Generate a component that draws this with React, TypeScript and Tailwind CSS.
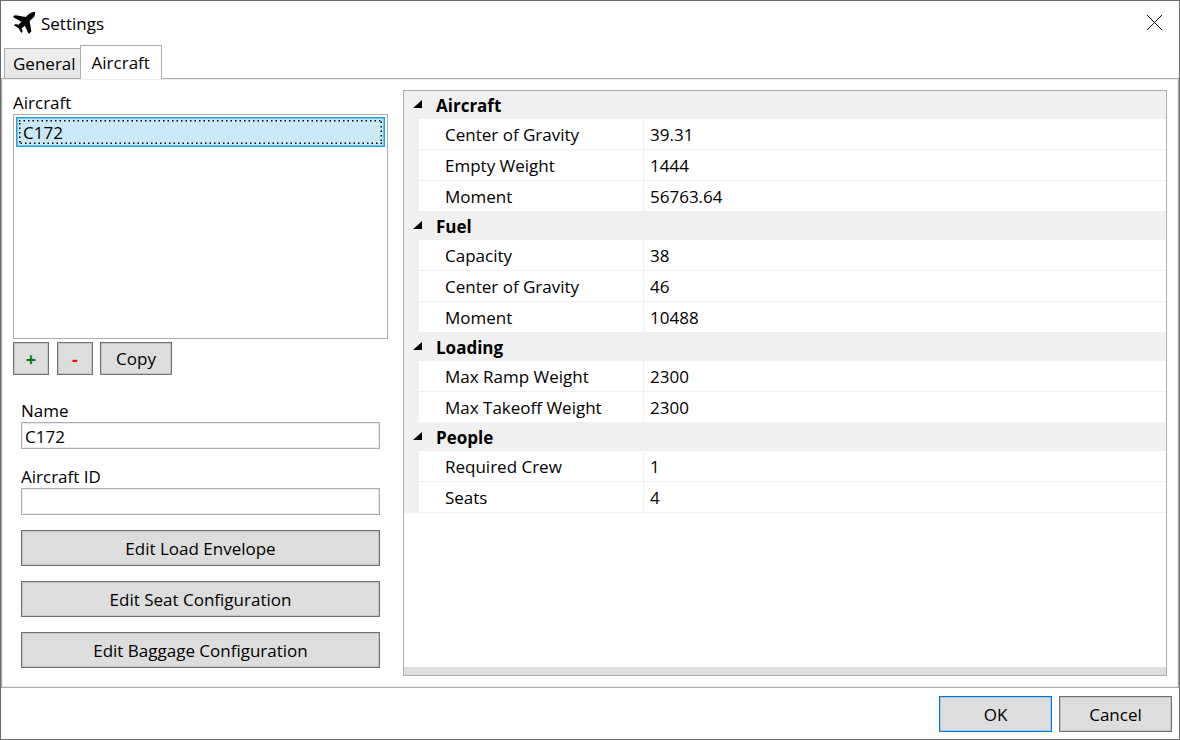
import { useState } from "react";
import type { ReactNode } from "react";

type Group = { title: string; rows: [string, string][] };

const groups: Group[] = [
  { title: "Aircraft", rows: [["Center of Gravity", "39.31"], ["Empty Weight", "1444"], ["Moment", "56763.64"]] },
  { title: "Fuel", rows: [["Capacity", "38"], ["Center of Gravity", "46"], ["Moment", "10488"]] },
  { title: "Loading", rows: [["Max Ramp Weight", "2300"], ["Max Takeoff Weight", "2300"]] },
  { title: "People", rows: [["Required Crew", "1"], ["Seats", "4"]] },
];

function PushButton({
  children,
  className = "h-9 w-full",
  border = "border-[#707070] inset-shadow-[0_0_0_1px_#c4c4c4]",
  label,
}: {
  children: ReactNode;
  className?: string;
  border?: string;
  label?: string;
}) {
  return (
    <button
      type="button"
      aria-label={label}
      className={`flex items-center justify-center border bg-[#dddddd] pt-px leading-6 hover:bg-[#bee6fd] ${border} ${className}`}
    >
      {children}
    </button>
  );
}

function TextField({ id, label, value = "" }: { id: string; label: string; value?: string }) {
  return (
    <div className="flex flex-col">
      <label htmlFor={id} className="h-[25px] pt-0.5 leading-6">{label}</label>
      <input
        id={id}
        type="text"
        defaultValue={value}
        className="h-[27px] w-full border border-[#abadb3] bg-white px-[3px] pt-0.5 inset-shadow-[0_0_0_1px_#ececee] outline-none"
      />
    </div>
  );
}

function PropertyGroup({ title, rows }: Group) {
  const [open, setOpen] = useState(true);
  return (
    <tbody>
      <tr className="h-7 bg-[#f0f0f0]">
        <th colSpan={3} scope="rowgroup" className="p-0 text-left font-bold">
          <button type="button" aria-expanded={open} onClick={() => setOpen(!open)} className="flex h-7 w-full items-center gap-3 pt-0.5 pl-2">
            <svg viewBox="0 0 12 12" className="h-3 w-3" aria-hidden="true">
              {open ? <path d="M10 0v8H1z" /> : <path d="M3 1l6 5-6 5z" />}
            </svg>
            {title}
          </button>
        </th>
      </tr>
      {open &&
        rows.map(([name, value]) => (
          <tr key={name} className="h-[31px]">
            <td className="bg-[#f0f0f0] p-0" />
            <th scope="row" className="border-r border-b border-[#f0f0f0] p-0 pt-0.5 pl-[26px] text-left font-normal">{name}</th>
            <td className="border-b border-[#f0f0f0] p-0 pt-0.5 pl-1.5">{value}</td>
          </tr>
        ))}
    </tbody>
  );
}

export default function App() {
  return (
    <div className="flex min-h-screen flex-col border border-[#6b6b6b] bg-white font-['Open_Sans','Noto_Sans',sans-serif] text-[17px] text-black">
      <header className="flex h-11 items-center justify-between pr-4 pl-3">
        <div className="flex items-center gap-1.5">
          <svg viewBox="0 0 66 66" className="h-[22px] w-[22px]" aria-hidden="true">
            <path d="M66 0Q68 10 59 19L50 28L55 58L49 65L45 62L36 41L26 49L29 58L25 63L17 49L3 40L8 36L17 38L25 29L1 16L2 11L8 10L38 15L47 7Q56 -1 66 0Z" />
          </svg>
          <h1 className="pt-0.5">Settings</h1>
        </div>
        <button type="button" aria-label="Close">
          <svg viewBox="0 0 16 16" className="h-4 w-4" fill="none" stroke="black" aria-hidden="true">
            <path d="M0 0l15 15M15 0L0 15" />
          </svg>
        </button>
      </header>

      <div role="tablist" className="z-10 -mb-px flex items-end pl-[3px]">
        <button type="button" role="tab" aria-selected="false" className="mb-px h-[30px] border border-b-0 border-[#acacac] bg-linear-to-b from-[#f0f0f0] to-[#e5e5e5] pr-[5px] pl-2">
          General
        </button>
        <button type="button" role="tab" aria-selected="true" className="-ml-0.5 h-[34px] border border-b-0 border-[#acacac] bg-white px-[11px]">
          Aircraft
        </button>
      </div>

      <main role="tabpanel" className="flex flex-1 gap-[15px] border border-[#acacac] p-[11px] inset-shadow-[0_0_0_1px_#ececec]">
        <section className="flex w-[375px] shrink-0 flex-col">
          <h2 id="aircraft-label" className="h-6 pt-px leading-6">Aircraft</h2>
          <ul role="listbox" aria-labelledby="aircraft-label" className="min-h-24 flex-1 border border-[#abadb3] p-0.5">
            <li role="option" aria-selected="true" className="relative border border-[#26a0da] bg-[#cbe8f6] px-1.5 pt-[3px] pb-px leading-6 inset-shadow-[0_0_0_1px_#6fbfe6]">
              C172
              <span className="pointer-events-none absolute inset-0.5" aria-hidden="true">
                <svg className="block h-full w-full">
                  <rect x="0" y="0" width="100%" height="100%" fill="none" stroke="black" strokeWidth="3" strokeDasharray="1.5 3" />
                </svg>
              </span>
            </li>
          </ul>
          <div className="mt-[3px] flex">
            <PushButton label="Add aircraft" className="mr-2 h-[33px] w-9 text-lg font-bold text-[#008000]">+</PushButton>
            <PushButton label="Remove aircraft" className="mr-[7px] h-[33px] w-9 text-lg font-bold text-[#ff0000]">-</PushButton>
            <PushButton className="h-[33px] w-[72px]">Copy</PushButton>
          </div>
          <div className="mt-[22px] mb-2 flex flex-col px-2">
            <div className="mb-[15px] flex flex-col gap-3.5">
              <TextField id="name" label="Name" value="C172" />
              <TextField id="aircraft-id" label="Aircraft ID" />
            </div>
            <div className="flex flex-col gap-[15px]">
              <PushButton>Edit Load Envelope</PushButton>
              <PushButton>Edit Seat Configuration</PushButton>
              <PushButton>Edit Baggage Configuration</PushButton>
            </div>
          </div>
        </section>

        <section className="flex min-w-0 flex-1 flex-col justify-between border border-[#abadb3]" aria-label="Properties">
          <table className="w-full table-fixed border-separate border-spacing-0">
            <colgroup>
              <col className="w-[15px]" />
              <col className="w-[225px]" />
              <col />
            </colgroup>
            {groups.map((g) => (
              <PropertyGroup key={g.title} {...g} />
            ))}
          </table>
          <div className="h-2 bg-[#dddddd]" />
        </section>
      </main>

      <footer className="flex justify-end gap-[7px] px-[7px] pt-2 pb-[7px]">
        <PushButton className="h-9 w-[113px]" border="border-[#0078d7] inset-shadow-[0_0_0_1px_#a9c8e4]">OK</PushButton>
        <PushButton className="h-9 w-[113px]">Cancel</PushButton>
      </footer>
    </div>
  );
}
